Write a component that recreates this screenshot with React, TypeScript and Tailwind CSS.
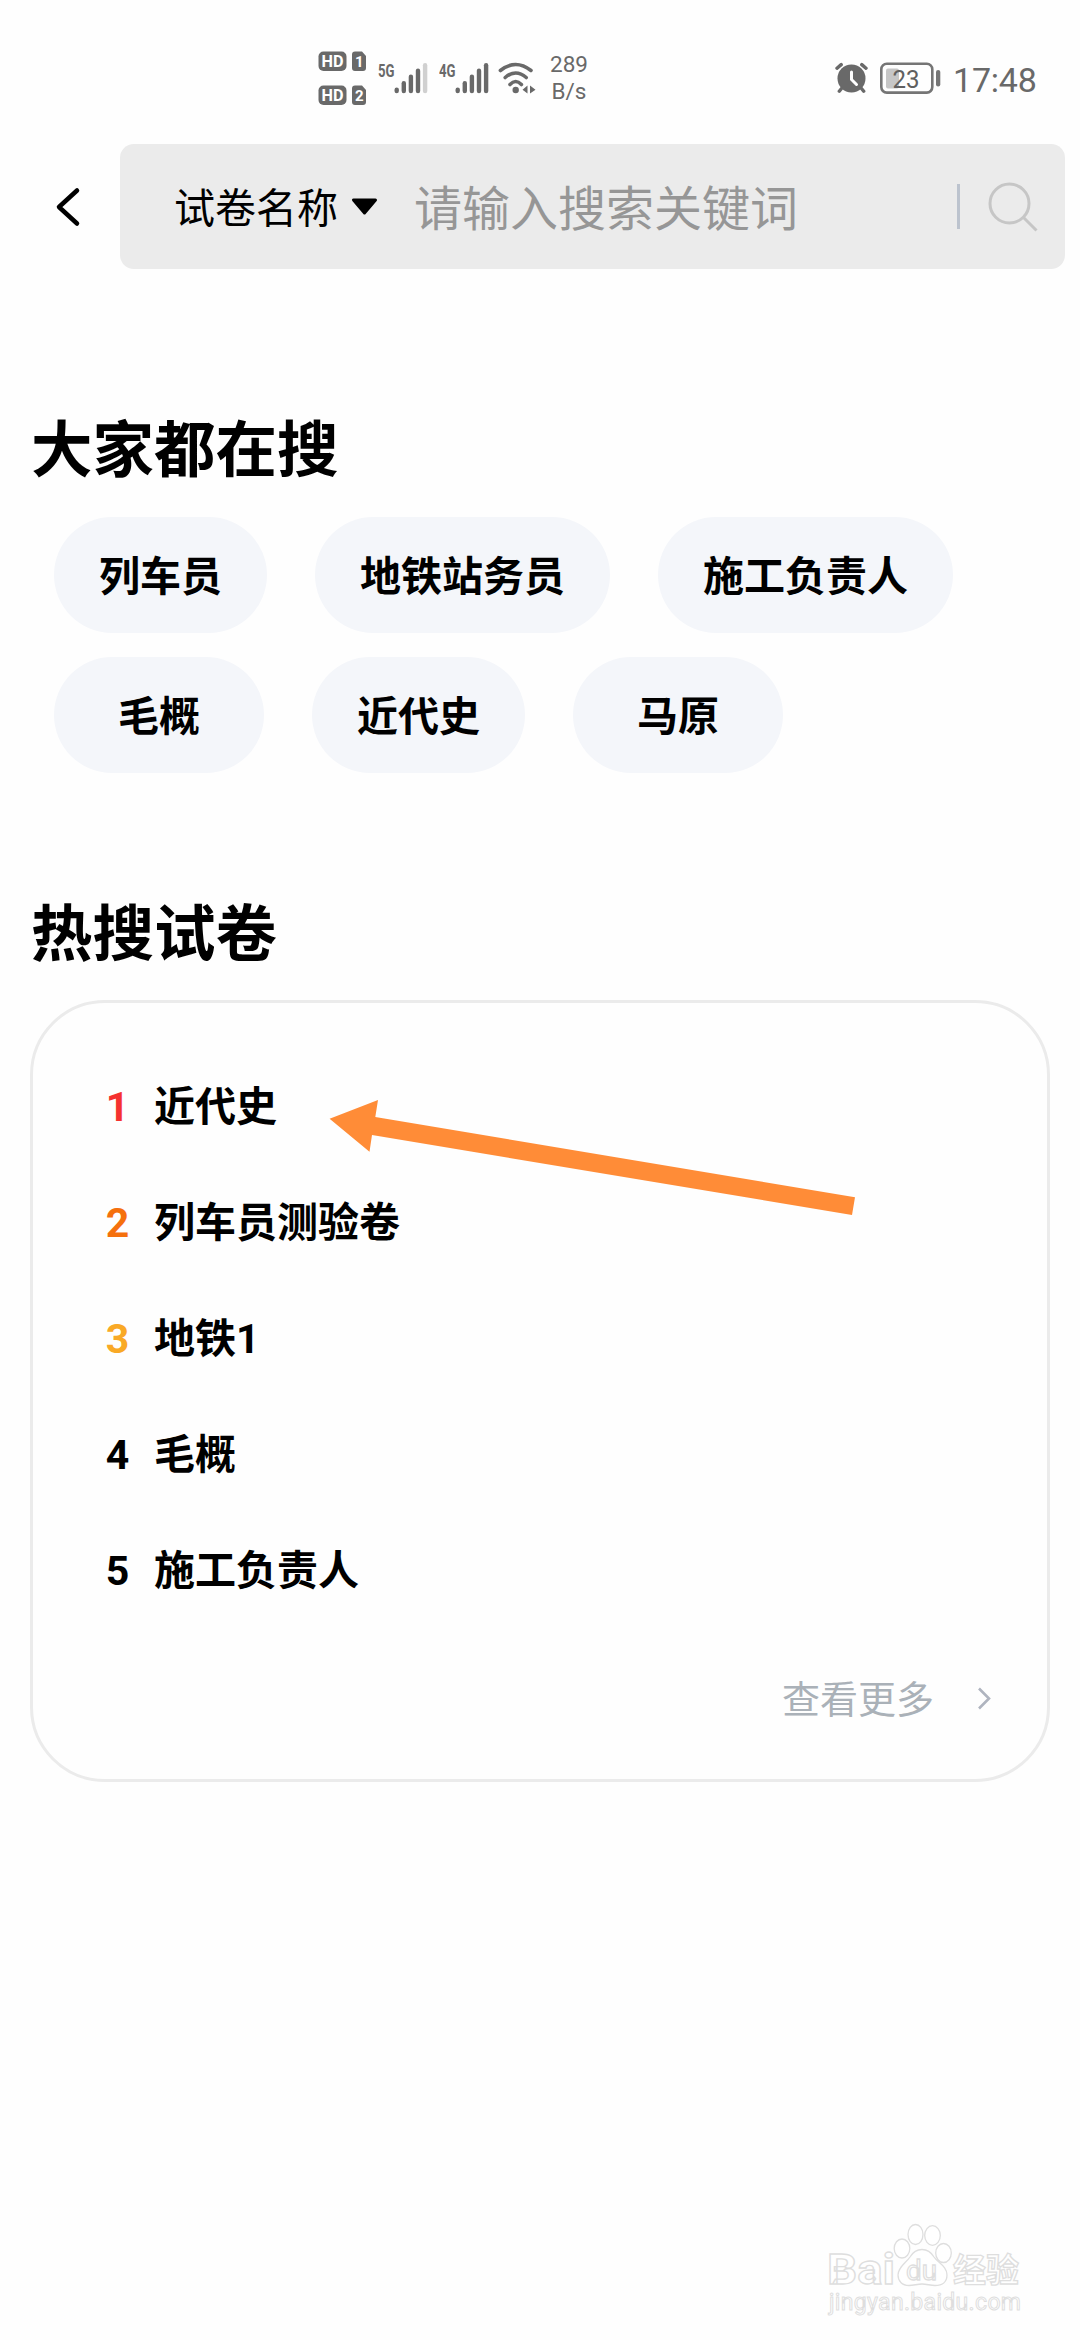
import React from "react";

const hotWords = [
  ["列车员", "地铁站务员", "施工负责人"],
  ["毛概", "近代史", "马原"],
];

const hotPapers = [
  { title: "近代史", color: "text-[#f5312f]" },
  { title: "列车员测验卷", color: "text-[#f5700d]" },
  { title: "地铁1", color: "text-[#f9a926]" },
  { title: "毛概", color: "text-black" },
  { title: "施工负责人", color: "text-black" },
];

const HdBadges = () => (
  <svg width="48" height="54" viewBox="0 0 48 54" fill="#696969">
    {[0, 34].map((y, i) => (
      <g key={y} transform={`translate(0 ${y})`}>
        <rect x="0.5" y="0.5" width="28" height="19.5" rx="5" />
        <path d="M37 0.5H44L48 5V17a3 3 0 0 1-3 3H37a3 3 0 0 1-3-3V3.5a3 3 0 0 1 3-3Z" />
        <text x="3.5" y="16" fontSize="16" fontWeight="700" fill="#fff" textLength="22" lengthAdjust="spacingAndGlyphs">
          HD
        </text>
        <text x="37" y="16" fontSize="15" fontWeight="700" fill="#fff">
          {i + 1}
        </text>
      </g>
    ))}
  </svg>
);

const Signal = ({ label, weakLast }: { label: string; weakLast?: boolean }) => (
  <svg width="52" height="54" viewBox="0 0 52 54">
    <text x="0" y="25.5" fontSize="19" fontWeight="700" fill="#696969" textLength="16.5" lengthAdjust="spacingAndGlyphs">
      {label}
    </text>
    {[36.5, 30, 23.5, 17.5, 12].map((y, i) => (
      <rect
        key={y}
        x={16.5 + i * 7.1}
        y={y}
        width="4.4"
        height={42.3 - y}
        rx="2.2"
        fill={weakLast && i === 4 ? "#d0d0d0" : "#696969"}
      />
    ))}
  </svg>
);

const Wifi = () => (
  <svg width="40" height="54" viewBox="0 0 40 54" fill="none" stroke="#696969" strokeWidth="3.6" strokeLinecap="round">
    <path d="M2.4 19.5Q17.7 7.5 33 19.5" />
    <path d="M7.2 26.5Q17.7 17.5 28.2 26.5" />
    <path d="M12 33.5Q17.7 27.5 23.4 33.5" />
    <circle cx="17.7" cy="39" r="3.2" fill="#696969" stroke="none" />
    <path d="M29.5 34.5V42.5L24.5 38.8ZM32 34.5V42.5L37.5 38.8Z" fill="#696969" stroke="none" />
  </svg>
);

const Alarm = () => (
  <svg width="34" height="54" viewBox="0 0 34 54" stroke="#696969" strokeLinecap="round" fill="none">
    <circle cx="16.5" cy="27.5" r="14" fill="#696969" stroke="none" />
    <path d="M2 17.2L6.2 13.6M31 17.2L26.8 13.6M6.5 37.5L4.3 40.2M26.5 37.5L28.7 40.2" strokeWidth="3.4" />
    <path d="M16.5 21V28.5L21.5 33.5" stroke="#fff" strokeWidth="3" />
  </svg>
);

const Battery = () => (
  <svg width="61" height="54" viewBox="0 0 61 54">
    <rect x="1.3" y="12.8" width="51" height="28.8" rx="5.5" fill="none" stroke="#757575" strokeWidth="2.6" />
    <rect x="6" y="17.5" width="13" height="20" rx="2" fill="#c6c6c6" />
    <rect x="56" y="19" width="4.3" height="16.5" rx="2.1" fill="#757575" />
    <text x="12.5" y="36.7" fontSize="26.5" fill="#606060" textLength="27" lengthAdjust="spacingAndGlyphs">
      23
    </text>
  </svg>
);

const StatusBar = () => (
  <div className="flex h-[144px] w-full items-start pt-[51px] pl-[318px] text-[#696969]">
    <HdBadges />
    <div className="ml-3">
      <Signal label="5G" weakLast />
    </div>
    <div className="ml-[9px]">
      <Signal label="4G" />
    </div>
    <div className="ml-[7px]">
      <Wifi />
    </div>
    <div className="ml-[11px] w-[40px] text-center text-[22.5px] leading-[27px]">
      <p>289</p>
      <p>B/s</p>
    </div>
    <div className="ml-[246px]">
      <Alarm />
    </div>
    <div className="ml-[11px]">
      <Battery />
    </div>
    <span className="ml-[12px] text-[34px] leading-[58px] tracking-[-0.2px]">17:48</span>
  </div>
);

const SearchBar = () => (
  <div className="flex h-[125px] items-center pr-[15px]">
    <div className="flex w-[120px] pl-[55px]">
      <svg width="26" height="42" viewBox="0 0 26 42" fill="none" stroke="#000" strokeWidth="4.5" strokeLinecap="round" strokeLinejoin="round">
        <path d="M22 4.5L4 21L22 37.5" />
      </svg>
    </div>
    <div className="flex h-full flex-1 items-center rounded-[14px] bg-[#ebebeb] pl-[54px]">
      <span className="pt-[5px] text-[41px] leading-none text-black">试卷名称</span>
      <svg className="ml-[13px]" width="27" height="18" viewBox="0 0 27 18">
        <path d="M2.5 2H24.5L13.5 15Z" stroke="#000" strokeWidth="3" strokeLinejoin="round" />
      </svg>
      <span className="ml-[36px] flex-1 pt-[6px] text-[48px] leading-none text-[#969696]">请输入搜索关键词</span>
      <div className="h-[45px] w-[3px] bg-[#bcc3ce]" />
      <svg className="mr-[27px] ml-[28px]" width="50" height="50" viewBox="0 0 50 50" fill="none" stroke="#c6c6c6" strokeWidth="3">
        <circle cx="21.5" cy="21.5" r="19.5" />
        <path d="M35.5 35.5L48.5 48.5" />
      </svg>
    </div>
  </div>
);

const Heading = ({ text }: { text: string }) => (
  <h2 className="pl-[31px] text-[61.5px] leading-[70px] font-bold text-black">{text}</h2>
);

const HotPapers = () => (
  <div className="relative mx-[30px] h-[782px] rounded-[75px] border-[3px] border-[#ebebeb] pt-[46px] pl-[70px]">
    {hotPapers.map((paper, i) => (
      <div key={paper.title} className="flex h-[116px] items-center text-[41px] leading-none font-bold text-black">
        <span className={`w-[29px] text-center ${paper.color}`}>{i + 1}</span>
        <span className="ml-[22px]">{paper.title}</span>
      </div>
    ))}
    <div className="mt-[45px] mr-[54px] flex items-center justify-end text-[38px] leading-[46px] text-[#aab1b8]">
      <span className="pt-[3px]">查看更多</span>
      <svg className="ml-[43px]" width="16" height="24" viewBox="0 0 16 24" fill="none" stroke="#afb4bf" strokeWidth="2.6">
        <path d="M2 1.5L12 11.5L2 21.5" />
      </svg>
    </div>
    {/* arrow pointing at the first paper */}
    <svg className="absolute top-[93px] left-[293px]" width="532" height="122" viewBox="326 1096 532 122">
      <path d="M329.6 1118.7L378 1100L375.3 1117L855 1197.3L852 1215L372 1135L369.5 1151.7Z" fill="#ff8c37" />
    </svg>
  </div>
);

const Watermark = () => (
  <svg className="absolute top-[2200px] left-[800px]" width="260" height="140" viewBox="0 0 260 140" fill="#fff" stroke="#dedede" strokeWidth="1.3">
    <text x="27" y="84" fontSize="42" fontWeight="700" textLength="68" lengthAdjust="spacingAndGlyphs">
      Bai
    </text>
    <ellipse cx="102" cy="48.5" rx="7.8" ry="9.5" />
    <ellipse cx="115.5" cy="34.5" rx="7.5" ry="10" />
    <ellipse cx="132.5" cy="35.5" rx="7.8" ry="9.8" />
    <ellipse cx="143.5" cy="53" rx="7.8" ry="9.5" />
    <path d="M122 49.5C128 49.5 131 52 134 57C138 63 147 66 147 75C147 82 142 85.5 135 85.5C130 85.5 127 84 122 84C117 84 114 85.5 109 85.5C102 85.5 98 81 98 75C98 67 106 63 110 57C113 52 116 49.5 122 49.5Z" />
    <text x="106" y="80" fontSize="28" textLength="31" lengthAdjust="spacingAndGlyphs">
      du
    </text>
    <text x="153" y="82" fontSize="33" fontWeight="700">
      经验
    </text>
    <text x="29" y="110" fontSize="23" textLength="192" strokeWidth="1">
      jingyan.baidu.com
    </text>
  </svg>
);

const App = () => {
  return (
    <div className="relative h-[2340px] w-[1080px] overflow-hidden bg-[#fefefe] font-['Roboto','Noto_Sans_CJK_SC',sans-serif]">
      <StatusBar />
      <SearchBar />
      <div className="mt-[147px]">
        <Heading text="大家都在搜" />
      </div>
      <div className="mt-[31px] flex flex-col gap-6 pl-[54px]">
        {hotWords.map((row, i) => (
          <div key={i} className="flex gap-12">
            {row.map((word) => (
              <div
                key={word}
                className="flex h-[116px] min-w-[210px] items-center justify-center rounded-full bg-[#f4f6fa] px-[45px] pt-[5px] text-[41px] leading-none font-bold text-black"
              >
                {word}
              </div>
            ))}
          </div>
        ))}
      </div>
      <div className="mt-[127px] mb-[30px]">
        <Heading text="热搜试卷" />
      </div>
      <HotPapers />
      <Watermark />
    </div>
  );
};

export default App;
